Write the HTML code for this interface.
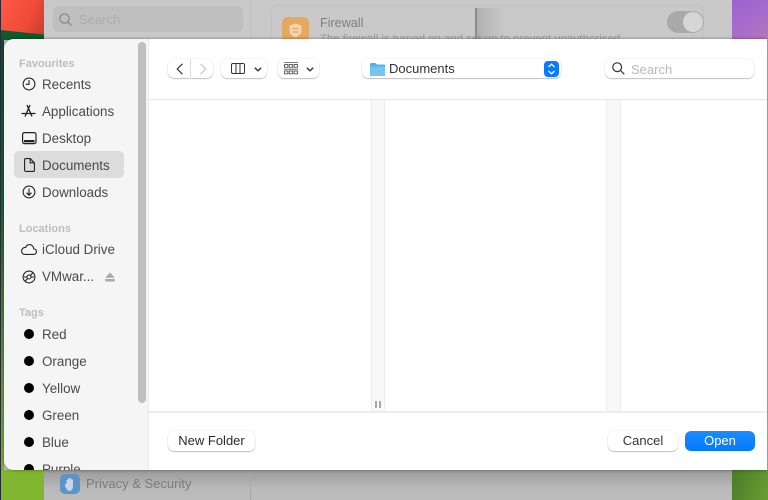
<!DOCTYPE html>
<html><head><meta charset="utf-8">
<style>
html,body{margin:0;padding:0}
body{width:768px;height:500px;overflow:hidden;position:relative;background:#bbb;font-family:"Liberation Sans",sans-serif;color:#333;filter:blur(.3px)}
div{position:absolute;box-sizing:border-box}
svg{position:absolute;overflow:visible}
.t{white-space:nowrap;line-height:16px;font-size:13.4px;color:#4a4a4a}
.h{white-space:nowrap;line-height:14px;font-size:11px;font-weight:bold;color:#bdbdbd}
.dot{width:10px;height:10px;border-radius:50%;background:#000;left:24px}
.b{background:#fff;border-radius:6px;box-shadow:0 0 0 .5px rgba(0,0,0,.07),0 1px 1px rgba(0,0,0,.22)}
</style></head><body>
<!-- background -->
<div style="left:0;top:0;width:44px;height:40px;background:linear-gradient(115deg,#ff5a48,#f04a38 60%,#c23c2c)"></div>
<div style="left:0;top:30px;width:44px;height:10px;background:#0d5a2c;clip-path:polygon(0 0,100% 45%,100% 100%,0 100%)"></div>
<div style="left:0;top:39px;width:4px;height:431px;background:linear-gradient(#06502a,#0f6a2c 40%,#5a9a2c 75%,#7ab032)"></div>
<div style="left:0;top:470px;width:44px;height:30px;background:#7fb52f"></div>
<div style="left:0;top:0;width:1px;height:500px;background:#2a2a3a"></div>
<div style="left:44px;top:0;width:688px;height:39px;background:#c9c9c9"></div>
<div style="left:44px;top:470px;width:688px;height:30px;background:linear-gradient(#9a9a9a,#b9b9b9 60%,#bdbdbd)"></div>
<div style="left:250px;top:0;width:1px;height:39px;background:#c0c0c0"></div>
<div style="left:250px;top:470px;width:1px;height:30px;background:#a8a8a8"></div>
<div style="left:732px;top:0;width:36px;height:39px;background:linear-gradient(150deg,#9a63cf,#a76ccb 55%,#b875b8)"></div>
<div style="left:732px;top:470px;width:36px;height:30px;background:linear-gradient(110deg,#4a7a28,#6a9e34)"></div>
<div style="left:53px;top:6px;width:190px;height:26px;background:#bfbfbf;border-radius:6px"></div>
<svg style="left:59px;top:13px" width="14" height="14" fill="none" stroke="#8a8a8a" stroke-width="1.3"><circle cx="5.5" cy="5.5" r="4.6"/><path d="M9 9l3.6 3.600"/></svg>
<div class="t" style="left:79px;top:12px;color:#adadad;font-size:13px">Search</div>
<div style="left:271px;top:5px;width:433px;height:40px;border:1px solid #c1c1c1;border-radius:6px"></div>
<div style="left:475px;top:8px;width:30px;height:31px;background:linear-gradient(90deg,#8a8a8a 0,#8a8a8a 1.500px,#b0b0b0 8%,#bcbcbc 50%,#c9c9c9 100%)"></div>
<div style="left:282px;top:17px;width:27px;height:27px;background:#e3a862;border-radius:6px"></div>
<svg style="left:289px;top:23px" width="13" height="15" fill="none"><path d="M6.500 .5L12.500 2.500V8C12.500 11 9.500 13.500 6.500 14.500C3.500 13.500 .5 11 .5 8V2.500Z" fill="#f2d3ac"/><path d="M3.500 5.500h6M3.500 9h6" stroke="#e3a862" stroke-width="1.200"/></svg>
<div class="t" style="left:320px;top:15px;color:#7e7e7e;font-size:12.6px">Firewall</div>
<div class="t" style="left:320px;top:31px;color:#9c9c9c;font-size:11.4px">The firewall is turned on and set up to prevent unauthorised</div>
<div style="left:667px;top:11px;width:37px;height:22px;background:#a9a9a9;border-radius:11px"></div>
<div style="left:683px;top:12px;width:20px;height:20px;background:#d6d6d6;border-radius:50%"></div>
<div style="left:60px;top:474px;width:20px;height:20px;background:#5c93c9;border-radius:5px"></div>
<svg style="left:64px;top:476px" width="12" height="16"><path d="M2.500 8V4a1 1 0 0 1 1.600 0V2.500a1 1 0 0 1 1.600 0a1 1 0 0 1 1.600 0V4a1 1 0 0 1 1.700 0V10C9 13 7.500 15 5.500 15C3.500 15 2.500 13 1 10C.5 8.500 1.800 7.500 2.500 8Z" fill="#c9d6e2"/></svg>
<div class="t" style="left:86px;top:476px;color:#7b7b7b;font-size:13px">Privacy &amp; Security</div>

<!-- dialog -->
<div style="left:4px;top:39px;width:763px;height:431px;background:#fff;border-radius:10px 0 0 10px;box-shadow:0 0 3px rgba(0,0,0,.45);overflow:hidden">
  <div style="left:0;top:0;width:145px;height:431px;background:#f5f5f5;border-right:1px solid #e9e9e9"></div>
  <div style="left:134px;top:3px;width:8px;height:361px;background:#bfbfbf;border-radius:4px"></div>
  <div style="left:10px;top:112px;width:110px;height:27px;background:#dcdcdc;border-radius:5px"></div>
  <div class="h" style="left:15px;top:18px">Favourites</div>
  <div class="t" style="left:38px;top:38px">Recents</div>
  <div class="t" style="left:38px;top:65px">Applications</div>
  <div class="t" style="left:38px;top:92px">Desktop</div>
  <div class="t" style="left:38px;top:119px">Documents</div>
  <div class="t" style="left:38px;top:146px">Downloads</div>
  <div class="h" style="left:15px;top:183px">Locations</div>
  <div class="t" style="left:38px;top:203px">iCloud Drive</div>
  <div class="t" style="left:38px;top:230px">VMwar...</div>
  <div class="h" style="left:15px;top:267px">Tags</div>
  <div class="t" style="left:38px;top:288px">Red</div>
  <div class="t" style="left:38px;top:315px">Orange</div>
  <div class="t" style="left:38px;top:342px">Yellow</div>
  <div class="t" style="left:38px;top:369px">Green</div>
  <div class="t" style="left:38px;top:396px">Blue</div>
  <div class="t" style="left:38px;top:423px">Purple</div>
  <div class="dot" style="left:20px;top:290px"></div>
  <div class="dot" style="left:20px;top:317px"></div>
  <div class="dot" style="left:20px;top:344px"></div>
  <div class="dot" style="left:20px;top:371px"></div>
  <div class="dot" style="left:20px;top:398px"></div>
  <div class="dot" style="left:20px;top:425px"></div>
  <!-- sidebar icons -->
  <svg style="left:18px;top:38px" width="14" height="14" fill="none" stroke="#222" stroke-width="1.100"><circle cx="7" cy="7" r="5.900"/><path d="M7 3v4.300H3.800"/></svg>
  <svg style="left:17px;top:65px" width="15" height="14" fill="none" stroke="#222" stroke-width="1.300"><path d="M6 1l5 11.500M9 1L4 12.500M.5 9.500h14"/></svg>
  <svg style="left:18px;top:93px" width="15" height="12" fill="none" stroke="#222" stroke-width="1.200"><rect x=".6" y=".6" width="13.400" height="11" rx="1.800"/><rect x="2" y="8" width="10.500" height="2.300" fill="#222" stroke="none"/></svg>
  <svg style="left:20px;top:119px" width="11" height="14" fill="none" stroke="#222" stroke-width="1.100"><path d="M.6 1.800A1.200 1.200 0 0 1 1.800 .6H6.200L10.400 4.800V12.200A1.200 1.200 0 0 1 9.200 13.400H1.800A1.200 1.200 0 0 1 .6 12.200ZM6.200 .6V4.800H10.400"/></svg>
  <svg style="left:18px;top:146px" width="14" height="14" fill="none" stroke="#222" stroke-width="1.100"><circle cx="7" cy="7" r="5.900"/><path d="M7 3.500v6.500M4.500 7.700L7 10.200 9.500 7.700"/></svg>
  <svg style="left:17px;top:205px" width="16" height="11" fill="none" stroke="#222" stroke-width="1.100"><path d="M4 10.400H12.500C14.300 10.400 15.400 9.200 15.400 7.600C15.400 6 14.200 5 12.900 5C12.500 2.600 10.800 .6 8.500 .6C6.600 .6 5.300 1.900 4.800 3.300C2.300 3.300 .6 5 .6 7C.6 9 2 10.400 4 10.400Z"/></svg>
  <svg style="left:18px;top:231px" width="14" height="14" fill="none" stroke="#222" stroke-width="1.100"><circle cx="7" cy="7" r="5.900"/><circle cx="7" cy="7" r="2"/><path d="M8.500 5.500L11 2.500M5.500 8.500L3 11.500M9 7h3M2 7h3"/></svg>
  <svg style="left:101px;top:233px" width="10" height="10" fill="#a9a9a9"><path d="M5 .5L9.800 5.800H.2Z"/><rect x=".2" y="7" width="9.600" height="2.500"/></svg>

  <!-- toolbar -->
  <div style="left:145px;top:60px;width:618px;height:1px;background:#e6e6e6"></div>
  <div class="b" style="left:164px;top:20px;width:22px;height:19px;border-radius:6px 0 0 6px"></div>
  <div class="b" style="left:187px;top:20px;width:22px;height:19px;border-radius:0 6px 6px 0"></div>
  <svg style="left:172px;top:24px" width="8" height="12" fill="none" stroke="#333" stroke-width="1.200"><path d="M6.500 .8L1.200 6l5.300 5.200"/></svg>
  <svg style="left:195px;top:24px" width="8" height="12" fill="none" stroke="#c4c4c4" stroke-width="1.200"><path d="M1.500 .8L6.800 6l-5.300 5.200"/></svg>
  <div class="b" style="left:217px;top:20px;width:46px;height:19px"></div>
  <svg style="left:227px;top:24px" width="14" height="11" fill="none" stroke="#333" stroke-width="1"><rect x=".5" y=".5" width="13" height="10" rx="1.500"/><path d="M5 .5v10M9 .5v10"/></svg>
  <svg style="left:250px;top:28px" width="8" height="5" fill="none" stroke="#333" stroke-width="1.400"><path d="M.8 .8L4 3.800 7.200 .8"/></svg>
  <div class="b" style="left:274px;top:20px;width:41px;height:19px"></div>
  <svg style="left:280px;top:23px" width="14" height="13" fill="none" stroke="#555" stroke-width=".9"><path d="M0 .5h14M0 7.200h14" stroke-width=".8"/><rect x=".5" y="2.500" width="3.400" height="2.800"/><rect x="5.300" y="2.500" width="3.400" height="2.800"/><rect x="10.100" y="2.500" width="3.400" height="2.800"/><rect x=".5" y="9" width="3.400" height="2.800"/><rect x="5.300" y="9" width="3.400" height="2.800"/><rect x="10.100" y="9" width="3.400" height="2.800"/></svg>
  <svg style="left:302px;top:28px" width="8" height="5" fill="none" stroke="#333" stroke-width="1.400"><path d="M.8 .8L4 3.800 7.200 .8"/></svg>
  <div class="b" style="left:358px;top:20px;width:199px;height:19px"></div>
  <svg style="left:366px;top:23px" width="15" height="14"><path d="M0 2A1 1 0 0 1 1 1H5.500L7 2.500H14A1 1 0 0 1 15 3.500V13A1 1 0 0 1 14 14H1A1 1 0 0 1 0 13Z" fill="#4fb2e8"/><path d="M0 4.500H15V13A1 1 0 0 1 14 14H1A1 1 0 0 1 0 13Z" fill="#74c6f0"/></svg>
  <div class="t" style="left:385px;top:22px;color:#333;font-size:13px">Documents</div>
  <div style="left:540px;top:22px;width:15px;height:16px;background:#0a7bff;border-radius:4px"></div>
  <svg style="left:543px;top:24px" width="9" height="12" fill="none" stroke="#fff" stroke-width="1.300"><path d="M1.500 4L4.500 1.300 7.500 4M1.500 8L4.500 10.700 7.500 8"/></svg>
  <div class="b" style="left:601px;top:20px;width:149px;height:19px"></div>
  <svg style="left:608px;top:23px" width="13" height="13" fill="none" stroke="#333" stroke-width="1.200"><circle cx="5.200" cy="5.200" r="4.400"/><path d="M8.500 8.500l3.800 3.800"/></svg>
  <div class="t" style="left:627px;top:23px;color:#b9b9b9;font-size:13px">Search</div>

  <!-- columns -->
  <div style="left:367px;top:61px;width:14px;height:312px;background:#f8f8f8;border-left:1px solid #ececec;border-right:1px solid #ececec"></div>
  <div style="left:602px;top:61px;width:15px;height:312px;background:#f8f8f8;border-left:1px solid #ececec;border-right:1px solid #ececec"></div>
  <div style="left:371px;top:362px;width:2px;height:7px;background:#a8a8a8"></div>
  <div style="left:375px;top:362px;width:2px;height:7px;background:#a8a8a8"></div>
  <div style="left:145px;top:372px;width:618px;height:2px;background:#ededed"></div>

  <!-- footer -->
  <div class="b" style="left:164px;top:392px;width:87px;height:20px;text-align:center;line-height:20px;font-size:13px;color:#2a2a2a">New Folder</div>
  <div class="b" style="left:604px;top:392px;width:70px;height:20px;text-align:center;line-height:20px;font-size:13px;color:#333">Cancel</div>
  <div style="left:681px;top:392px;width:70px;height:20px;border-radius:6px;background:linear-gradient(#1a8cff,#0479fb);text-align:center;line-height:20px;font-size:13px;font-weight:normal;color:#fff">Open</div>
</div>
</body></html>
